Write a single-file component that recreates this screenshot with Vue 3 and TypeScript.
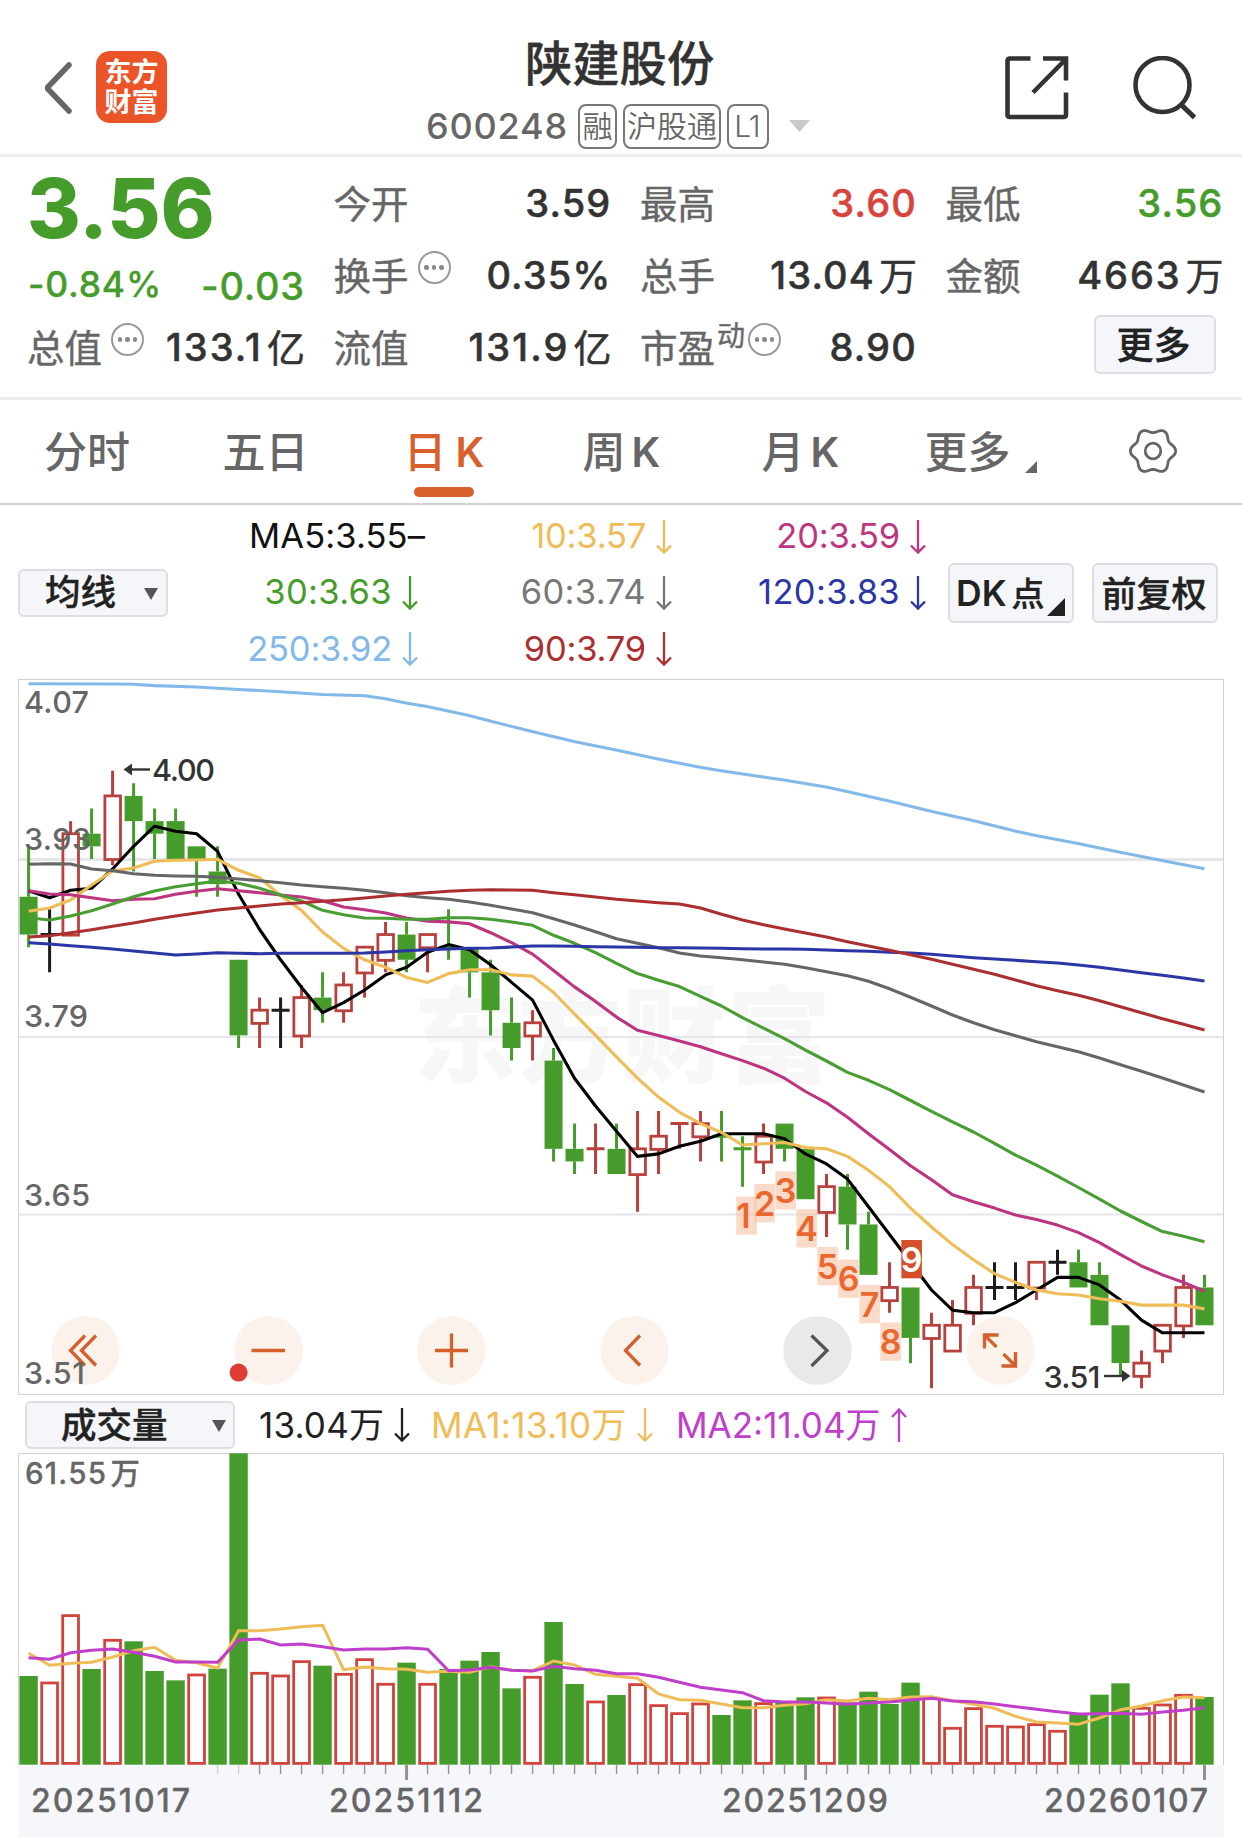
<script setup lang="ts">
type Tone = 'g' | 'r' | 'k'
type Candle = [tone: Tone, top: number, bottom: number, high: number, low: number, close: number]

const STEP = 20.998
const cx = (i: number): number => 28.6 + STEP * i
const py = (cents: number): number => 770.7 + (400 - cents) * 12.604

// tone, body top, body bottom, high, low (prices in cents)
const raw = `g 390 387 394 386|k 387 387 389 384|r 395 387 396 387|g 395 394 397 393|r 398 393 400 392.5
g 398 396 399 392|g 396 395 397 393|g 396 393 397 393|g 394 393 394 390|g 392 391 394 390
g 385 379 385 378|r 381 380 382 378|k 381 381 382 378|r 382 379 383 378|g 382 381 384 380
r 383 381 384 380|r 386 384 386 382|r 387 385 388 384|g 387 385 388 384|r 387 386 387 384
g 386 386 389 385|g 386 384 386 382|g 384 381 385 379|g 380 378 382 377|r 380 379 381 377
g 377 370 378 369|g 370 369 372 368|r 370 370 372 368|g 370 368 372 368|r 370 368 373 365
r 371 370 373 368|r 372 372 372 370|r 372 371 373 369|g 371 371 373 369|g 370 370 371 367
r 371 369 372 368|g 372 370 372 369|g 370 366 370 366|r 367 365 368 363|g 367 364 368 362
g 364 360 365 360|r 359 358 361 357|g 359 355 359 353|r 356 355 357 351|r 356 354 358 354
r 359 357 360 356|k 359 359 361 358|k 359 359 361 358|r 361 359 361 358|k 361 361 362 360
g 361 359 362 359|g 360 356 361 356|g 356 353 356 352|r 353 352 354 351|r 356 354 356 353
r 359 356 360 355|g 359 356 360 356`

const candles: Candle[] = raw.split(/[|\n]/).map((row) => {
  const p = row.trim().split(' ')
  const [top, bottom, high, low] = p.slice(1).map(Number)
  return [p[0] as Tone, top, bottom, high, low, p[0] === 'g' ? bottom : top]
})

const toneColor: Record<Tone, string> = { g: '#469c2b', r: '#b8413d', k: '#1c1c1c' }

const points = (ys: number[]): string => ys.map((y, i) => `${cx(i).toFixed(1)},${y.toFixed(1)}`).join(' ')
const nums = (s: string): number[] => s.trim().split(/\s+/).map(Number)
const lift = (ys: number[]): number[] => ys.map((v) => 670 + v / 3)

// Averages whose window starts before the first candle carry their own leading values.
function average(window: number, lead: number[]): string {
  const ys = lift(lead)
  for (let i = lead.length; i < candles.length; i++) {
    let sum = 0
    for (let k = i - window + 1; k <= i; k++) sum += candles[k][5]
    ys.push(py(sum / window))
  }
  return points(ys)
}

const priceLines = [
  { color: '#000', pts: average(5, nums('662 683 661 655')) },
  { color: '#efbc57', pts: average(10, nums('724 714 690 645 603 594 574 571 570 568')) },
  { color: '#bd3580', pts: average(20, nums('662 672 674 683 692 688 686 673 664 656 662 668 675 681 692 711 719 729 744')) },
  { color: '#489d33', pts: average(30, nums(`743 750 738 722 702 680 663 650 641 633 640 655 675 693 721 734 744
    745 748 748 743 743 748 756 766 796 820 848 880`)) },
  { color: '#666', pts: points(lift(nums(`583 581 582 597 602 611 616 618 619 622 627 632 638 645 650 655 661 668
    677 683 688 696 706 717 728 746 765 785 806 820 833 849 858 863 869 876 883 893 905 917 934 956 982 1008 1035
    1058 1079 1097 1115 1130 1145 1164 1184 1204 1224 1245 1266`))) },
  { color: '#2a36a5', pts: points(lift(nums(`818 822 827 832 837 843 849 855 852 848 850 851 850 850 850 850 849
    846 842 839 837 835 834 831 828 828 829 830 831 832 833 833 834 835 836 837 837 838 840 842 844 847 849 853 858
    863 867 871 875 879 885 892 900 908 916 924 933`))) },
  { color: '#ac2f30', pts: points(lift(nums(`801 797 788 779 769 759 748 738 729 720 714 708 702 698 694 689 684
    678 673 668 664 661 659 660 661 668 674 681 688 693 698 702 714 733 750 764 777 789 801 815 828 841 854 868 883
    898 913 930 947 962 976 992 1010 1028 1046 1063 1080`))) },
]

const yearLine =
  '28.6,683.7 113,684 133.6,684.3 154.6,685.6 196.6,687 238.6,689.5 280.6,691.7 322.6,694.5 364.6,695.7 385.6,698.7 406,703 427,706.5 469,715.5 490,721 532,731.5 574,741.5 616,750 658,759 700,767.3 721,770.7 763,777 784,780 826,787 847,791.5 890,801.3 932,811.5 974,820.7 1015,831 1037,835.7 1078,843.5 1120,852.3 1162,860.4 1204.5,868.7'

const countdown = [
  [34, 1196.5], [35, 1184], [36, 1171.3], [37, 1209.2], [38, 1247], [39, 1259.5], [40, 1285], [41, 1322.5], [42, 1240],
].map(([i, y], n) => ({ n: n + 1, x: cx(i) - (n === 0 ? 6.3 : 9.2), tx: cx(i) + 1, y }))

const volTop = nums(`228 245 43 207 117 124 213 241 221 206 -440 216 224 181 197 219 175 249 188 249 207 182 156 265
  228 66 252 302 285 250 313 337 308 345 301 307 305 292 290 307 275 312 248 291 381 322 375 377 370 390 343 284 250
  321 311 282 291`)
const volTone = 'grrgrggg rggrrrgrrrgrgg ggrggrgrrrrggrggrggggrrrrrrrgggrrrg'.replaceAll(' ', '')
const volumes = volTop.map((v, i) => ({ x: cx(i), y: 1600 + v / 3, up: volTone[i] === 'r' }))
const volLine = (s: string): string => points(nums(s).map((v) => 1600 + v / 3))
const volShort = volLine(`160 196 190 187 171 152 142 181 188 204 92 92 87 80 76 209 201 206 208 217 214 217 200 211
  212 183 195 223 229 235 282 299 301 312 323 323 316 311 299 303 295 299 291 290 302 313 325 349 366 369 373 354 329
  318 302 291 293`)
const volLong = volLine(`173 178 158 151 147 157 169 186 186 187 120 117 135 132 140 150 147 147 143 148 212 210 202
  211 213 199 206 211 221 221 232 247 262 270 278 302 306 306 309 313 309 306 300 295 303 305 312 320 328 335 342 341
  340 343 336 331 323`)

const ticks = Array.from({ length: 48 }, (_, k) => k + 9)
const legend = [
  { t: 'MA5:3.55–', c: '#111', flat: true }, { t: '10:3.57', c: '#efbc57' }, { t: '20:3.59', c: '#bd3580' },
  { t: '30:3.63', c: '#469c2b', wide: true }, { t: '60:3.74', c: '#777', wide: true }, { t: '120:3.83', c: '#2a36a5', wide: true },
  { t: '250:3.92', c: '#82b9ea' }, { t: '90:3.79', c: '#ac2f30' },
]
const gear = (() => {
  const out: string[] = []
  for (let a = 0; a < 360; a += 5) {
    const r = 20.5 - 2.2 * Math.cos((a * 6 * Math.PI) / 180)
    const t = (a * Math.PI) / 180
    out.push(`${(26 + r * Math.sin(t)).toFixed(1)},${(26 - r * Math.cos(t)).toFixed(1)}`)
  }
  return out.join(' ')
})()
</script>

<template>
  <div class="page">
    <header class="top">
      <div class="left">
        <svg class="back" width="32" height="56" viewBox="0 0 32 56"><path d="M27 5 5 28 27 51" fill="none" stroke="#666" stroke-width="5.5" stroke-linecap="round" stroke-linejoin="bevel" /></svg>
        <div class="logo"><span>东方</span><span>财富</span></div>
      </div>
      <div class="mid">
        <h1>陕建股份</h1>
        <div class="sub">
          <span class="code">600248</span>
          <span class="tag t1">融</span><span class="tag t2">沪股通</span><span class="tag t3">L1</span>
          <svg width="21" height="12" viewBox="0 0 21 12"><path d="M0 0H21L10.5 12z" fill="#c9c9c9" /></svg>
        </div>
      </div>
      <div class="right">
        <svg width="64" height="64" viewBox="0 0 64 64" fill="none" stroke="#333" stroke-width="4.6"><path d="M25.500 2.500H5Q2.500 2.500 2.500 5V58.500Q2.500 61 5 61H58.500Q61 61 61 58.500V36.500M38 2.500H61V24.500M28 36.500 60.500 3.500" /></svg>
        <svg width="66" height="66" viewBox="0 0 66 66" fill="none" stroke="#333" stroke-width="4.6"><circle cx="29.500" cy="29" r="27" /><path d="M48 48.500 61.500 61.500" stroke-width="5.200" /></svg>
      </div>
    </header>

    <section class="quote">
      <div class="col c1">
        <div class="price">3.56</div>
        <div class="row chg"><span>-0.84%</span><span class="abs">-0.03</span></div>
        <div class="row"><label>总值<i class="info"><b /><b /><b /></i></label><span class="v loose">133.1<em>亿</em></span></div>
      </div>
      <div class="col">
        <div class="row"><label>今开</label><span class="v">3.59</span></div>
        <div class="row"><label>换手<i class="info"><b /><b /><b /></i></label><span class="v">0.35%</span></div>
        <div class="row"><label>流值</label><span class="v loose">131.9<em>亿</em></span></div>
      </div>
      <div class="col">
        <div class="row"><label>最高</label><span class="v up">3.60</span></div>
        <div class="row"><label>总手</label><span class="v">13.04<em>万</em></span></div>
        <div class="row"><label>市盈<sup>动</sup><i class="info tight"><b /><b /><b /></i></label><span class="v">8.90</span></div>
      </div>
      <div class="col">
        <div class="row"><label>最低</label><span class="v down">3.56</span></div>
        <div class="row"><label>金额</label><span class="v amount">4663<em>万</em></span></div>
        <div class="row end"><button class="btn more">更多</button></div>
      </div>
    </section>

    <nav class="tabs">
      <span>分时</span><span>五日</span><span class="on">日<u>K</u></span><span>周<u>K</u></span><span>月<u>K</u></span>
      <span>更多<svg class="corner" width="12" height="12" viewBox="0 0 12 12"><path d="M12 0V12H0z" fill="#666" /></svg></span>
      <svg class="gear" width="52" height="52" viewBox="0 0 52 52" fill="none" stroke="#666" stroke-width="2.800"><polygon :points="gear" stroke-linejoin="round" /><circle cx="26" cy="26" r="7.800" /></svg>
    </nav>

    <section class="legend">
      <button class="btn avg">均线<svg width="14" height="12" viewBox="0 0 14 12"><path d="M0 0H14L7 12z" fill="#555" /></svg></button>
      <div class="mas">
        <span v-for="m in legend" :key="m.t" :class="{ flat: m.flat, wide: m.wide }" :style="{ color: m.c }">{{ m.t }}<svg v-if="!m.flat" width="16" height="36" viewBox="0 0 16 36" fill="none" stroke="currentColor" stroke-width="2.300"><path d="M8 1V33M1 26.500 8 33.500 15 26.500" /></svg></span>
      </div>
      <button class="btn dk">DK<em>点</em><svg width="18" height="18" viewBox="0 0 18 18"><path d="M18 0V18H0z" fill="#222" /></svg></button>
      <button class="btn adj">前复权</button>
    </section>

    <svg class="chart" width="1242" height="717" viewBox="0 679 1242 717">
      <rect x="18.500" y="679.500" width="1205" height="715" fill="#fff" stroke="#cfd2d6" />
      <text x="413" y="1075" class="mark" textLength="418">东方财富</text>
      <g stroke="#e4e6ea" stroke-width="2"><path d="M19 859.500H1223" stroke-width="2.800" /><path d="M19 1037H1223M19 1214.500H1223" /></g>
      <g v-for="(c, i) in candles" :key="i" :stroke="toneColor[c[0]]" stroke-width="3" fill="none">
        <template v-if="c[1] === c[2]">
          <path :d="`M${cx(i)} ${py(c[3])}V${py(c[4])}M${cx(i) - 9} ${py(c[1])}h18`" />
        </template>
        <template v-else>
          <path :d="`M${cx(i)} ${py(c[3])}V${py(c[1])}M${cx(i)} ${py(c[2])}V${py(c[4])}`" />
          <rect v-if="c[0] === 'g'" :x="cx(i) - 9" :y="py(c[1])" width="18" :height="py(c[2]) - py(c[1])" fill="#469c2b" stroke="none" />
          <rect v-else :x="cx(i) - 7.700" :y="py(c[1])" width="15.600" :height="py(c[2]) - py(c[1]) + 0.600" stroke-width="2.800" />
        </template>
      </g>
      <g fill="none" stroke-width="3.100" stroke-linejoin="round">
        <polyline :points="yearLine" stroke="#82b9ea" />
        <polyline v-for="l in priceLines" :key="l.color" :points="l.pts" :stroke="l.color" />
      </g>
      <g v-for="d in countdown" :key="d.n" class="count">
        <rect :x="d.x" :y="d.y" width="20.600" height="38.300" :fill="d.n === 9 ? '#d2512a' : '#f6c3a6'" :fill-opacity="d.n === 9 ? 1 : 0.6" />
        <text :x="d.tx" :y="d.y + 31.500" :fill="d.n === 9 ? '#fff' : '#ea682f'">{{ d.n }}</text>
      </g>
      <g fill="#fbf2ec">
        <circle v-for="x in [85.500, 268.500, 451.500, 634.500, 1000.500]" :key="x" :cx="x" cy="1350.500" r="34.300" />
        <circle cx="817.500" cy="1350.500" r="34.300" fill="#e9e9e9" />
      </g>
      <g fill="none" stroke="#d4602b" stroke-width="3.300">
        <path d="M85 1335.500 70.500 1350.500 85 1365.500M96 1335.500 81.500 1350.500 96 1365.500" />
        <path d="M251.500 1350.500H285M435 1350.500H468M451.500 1333.500V1367.500" />
        <path d="M640 1335.500 625.500 1350.500 640 1365.500" />
        <path d="M811.500 1335.500 827 1350.500 811.500 1366" stroke="#555" />
        <path d="M984.500 1348.500V1335H998.500M984.500 1335 996.500 1347M1001.500 1366H1015.500V1352M1015.500 1366 1003.500 1354" />
      </g>
      <circle cx="238.600" cy="1372.600" r="9" fill="#de3b34" />
      <g class="axis">
        <text x="24" y="712.500" textLength="65">4.07</text><text x="24" y="849.500" textLength="67">3.93</text>
        <text x="24" y="1027" textLength="64">3.79</text><text x="24" y="1206" textLength="66">3.65</text>
        <text x="24" y="1384" textLength="61">3.51</text>
        <text x="152" y="781" fill="#333" textLength="63">4.00</text><text x="1043.500" y="1388" fill="#333" textLength="57">3.51</text>
      </g>
      <g fill="#333" stroke="#333" stroke-width="2.400">
        <path d="M128 769.500H150" /><path d="M123.500 769.500 132 763.500V775.500z" stroke="none" />
        <path d="M1104 1376H1124" /><path d="M1130.500 1376 1122 1370V1382z" stroke="none" />
      </g>
    </svg>

    <section class="volbar">
      <button class="btn vol">成交量<svg width="14" height="12" viewBox="0 0 14 12"><path d="M0 0H14L7 12z" fill="#555" /></svg></button>
      <span class="m1">13.04万<svg width="16" height="36" viewBox="0 0 16 36" fill="none" stroke="currentColor" stroke-width="2.300"><path d="M8 1V33M1 26.500 8 33.500 15 26.500" /></svg></span>
      <span class="m2">MA1:13.10万<svg width="16" height="36" viewBox="0 0 16 36" fill="none" stroke="currentColor" stroke-width="2.300"><path d="M8 1V33M1 26.500 8 33.500 15 26.500" /></svg></span>
      <span class="m3">MA2:11.04万<svg width="16" height="36" viewBox="0 0 16 36" fill="none" stroke="currentColor" stroke-width="2.300"><path d="M8 35V3M1 10 8 2.500 15 10" /></svg></span>
    </section>

    <svg class="chart" width="1242" height="384" viewBox="0 1453 1242 384">
      <rect x="18" y="1765" width="1206" height="72" fill="#f6f7fa" />
      <path d="M18.500 1765V1453.500H1223.500V1765" fill="#fff" stroke="#cfd2d6" />
      <template v-for="(v, i) in volumes" :key="i">
        <rect v-if="v.up" :x="v.x - 7.900" :y="v.y + 1.300" width="15.800" :height="1763.400 - v.y - 1.300" fill="#fff" stroke="#d0443d" stroke-width="2.800" />
        <rect v-else :x="v.x - 9.200" :y="v.y" width="18.400" :height="1764.700 - v.y" fill="#469c2b" />
      </template>
      <g fill="none" stroke-width="3"><polyline :points="volShort" stroke="#efbc57" /><polyline :points="volLong" stroke="#c03fca" /></g>
      <rect
        v-for="i in ticks" :key="i" :x="cx(i) - ((i + 1) % 19 === 0 ? 1.500 : 0.700)" y="1765"
        :width="(i + 1) % 19 === 0 ? 3 : 1.400" :height="(i + 1) % 19 === 0 ? 15 : 9" fill="#939393" :opacity="i < 11 ? 0.4 : 1"
      />
      <g class="dates">
        <text x="25" y="1484" class="vmax" textLength="81">61.55</text><text x="110.500" y="1484" class="vmax">万</text>
        <text x="31" y="1812" textLength="159">20251017</text><text x="329" y="1812" textLength="154">20251112</text>
        <text x="722" y="1812" textLength="166">20251209</text><text x="1044" y="1812" textLength="164">20260107</text>
      </g>
    </svg>
  </div>
</template>

<style>
body { margin: 0; background: #fff; }
</style>

<style scoped>
.page { width: 1242px; height: 1837px; overflow: hidden; background: #fff; color: #333; font-family: Inter, "Noto Sans CJK SC", sans-serif; font-size: 37px; }
.page svg { flex: none; display: block; }
em, i, u { font-style: normal; text-decoration: none; }
.top { box-sizing: border-box; height: 157px; border-bottom: 3px solid #ededed; display: grid; grid-template-columns: 426px 1fr 237px; }
.left { display: flex; align-items: flex-start; padding: 51px 0 0 42px; }
.back { margin: 9px 22px 0 0; }
.logo { width: 71px; height: 72px; border-radius: 14px; background: #ea5428; color: #fff; display: flex; flex-direction: column; align-items: center; justify-content: center; font-size: 27px; font-weight: 700; line-height: 30px; padding-top: 1px; box-sizing: border-box; }
.mid { display: flex; flex-direction: column; }
h1 { margin: 36px 0 0 99px; font-size: 47.300px; font-weight: 500; line-height: 56px; -webkit-text-stroke: .4px; }
.sub { display: flex; align-items: center; height: 46px; margin-top: 11px; color: #666; }
.code { font-size: 36px; font-weight: 500; letter-spacing: .8px; width: 152px; margin-top: -1px; }
.tag { box-sizing: border-box; height: 45px; border: 2px solid #777; border-radius: 8px; font-size: 30px; font-weight: 350; line-height: 40px; text-align: center; margin-right: 6px; white-space: nowrap; }
.t1 { width: 39px; } .t2 { width: 98px; } .t3 { width: 42px; margin-right: 20px; letter-spacing: -1px; padding-right: 2px; }
.right { display: flex; padding: 56px 0 0; }
.right svg { margin-right: 64px; }
.quote { box-sizing: border-box; height: 243px; padding: 10px 18px 0 28px; border-bottom: 3px solid #ededed; display: grid; grid-template-columns: 277px 277px 276px 277px; column-gap: 29.500px; }
.col { display: flex; flex-direction: column; }
.row { height: 72px; display: flex; justify-content: space-between; align-items: center; white-space: nowrap; }
label { display: flex; align-items: center; color: #666; font-size: 37.500px; margin: -4px 0 0 -1px; -webkit-text-stroke: .4px; }
.v { display: flex; align-items: center; font-weight: 500; font-size: 38px; letter-spacing: 1.200px; -webkit-text-stroke: .5px; }
.loose { letter-spacing: 2.100px; }
.amount { letter-spacing: 1.900px; }
.v em { margin: -3px 0 0 4px; font-size: 38px; font-weight: 400; letter-spacing: 0; }
.up { color: #d9433d; } .down, .chg, .price { color: #469c2b; }
.price { height: 82px; line-height: 88px; margin: -2px 0 0 -1px; font-size: 82px; font-weight: 800; letter-spacing: -.3px; }
.chg { height: 64px; padding-top: 10px; box-sizing: border-box; font-size: 35.500px; font-weight: 500; letter-spacing: .8px; -webkit-text-stroke: .3px; }
.chg .abs { font-size: 38px; margin-top: 3px; }
.info { box-sizing: border-box; width: 33px; height: 33px; border: 2.500px solid #999; border-radius: 50%; display: flex; align-items: center; justify-content: center; gap: 3px; margin: -11px 0 0 9px; }
.info b { width: 4.500px; height: 4.500px; border-radius: 50%; background: #888; }
.info.tight { margin-left: 3px; }
sup { font-size: 28px; line-height: 30px; margin: -18px 0 0 2px; }
.end { justify-content: flex-end; }
.btn { box-sizing: border-box; padding: 0; margin: 0; border: 2px solid #dcdee1; border-radius: 6px; background: #f5f6f9; color: #222; font: 500 35.500px Inter, "Noto Sans CJK SC", sans-serif; line-height: 40px; display: flex; align-items: center; white-space: nowrap; -webkit-text-stroke: .4px; }
.more { width: 122px; height: 59px; margin: -5px 8px 0 0; padding: 3px 2px 0 0; justify-content: center; font-size: 37px; }
.tabs { box-sizing: border-box; height: 105px; border-bottom: 2px solid #d0d3d3; display: grid; grid-template-columns: 178.500px 181px 179px 179px 163px 203px 1fr; padding-left: 44px; color: #666; font-size: 43px; font-weight: 500; line-height: 104px; }
.tabs span { display: flex; position: relative; }
.tabs u { margin-left: 6px; font-weight: 600; font-size: 41px; }
.tabs .on { color: #d8602b; }
.tabs .on u { margin-left: 9px; }
.tabs .on::after { content: ""; position: absolute; left: 10px; top: 87px; width: 60px; height: 10px; border-radius: 5px; background: #d8602b; }
.corner { margin: 61px 0 0 14px; }
.gear { margin: 25px 0 0 -1px; }
.legend { height: 174px; display: flex; align-items: center; padding-left: 18px; }
.legend .avg { width: 150px; height: 48px; padding: 0 0 0 25px; margin-top: 2px; }
.avg svg { margin: 1px 0 0 28px; }
.mas { width: 758px; height: 169px; display: grid; grid-template-columns: 250px 254px 254px; grid-auto-rows: 56.300px; font-size: 34.500px; }
.mas span { display: flex; align-items: center; justify-content: flex-end; white-space: nowrap; letter-spacing: -.2px; }
.mas svg { margin: 2px 0 0 10px; }
.mas .flat { margin-right: -7px; letter-spacing: .1px; }
.mas .wide { letter-spacing: .35px; }
.dk { width: 126px; height: 60px; margin: 2px 0 0 22px; padding: 2px 0 0 6px; font-weight: 600; -webkit-text-stroke: 0; }
.dk em { margin: -1px 0 0 5px; font-size: 33px; font-weight: 500; -webkit-text-stroke: .4px; }
.dk svg { margin: 26px 0 0 2px; }
.adj { width: 126px; height: 60px; margin: 2px 0 0 18px; padding: 2px 2px 0 0; justify-content: center; font-size: 35px; }
.mark { font: 900 104px "Noto Sans CJK SC", sans-serif; fill: #f7f7f8; }
.axis { font-size: 30.500px; font-weight: 500; fill: #666; }
.count text { font-size: 34px; font-weight: 600; text-anchor: middle; }
.volbar { height: 57px; display: flex; align-items: center; padding: 1px 0 0 25px; box-sizing: border-box; font-size: 36px; }
.vol { width: 210px; height: 48px; padding: 1px 0 0 34px; }
.vol svg { margin: 0 0 0 44px; }
.volbar span { display: flex; align-items: center; white-space: nowrap; font-size: 35px; letter-spacing: .2px; line-height: 40px; }
.volbar span svg { margin-left: 10px; }
.m1 { margin-left: 24px; width: 172px; color: #222; } .volbar .m2 { width: 245px; color: #efbc57; letter-spacing: .35px; } .volbar .m3 { color: #c03fca; letter-spacing: 0; }
.dates { font-size: 32px; font-weight: 500; fill: #666; stroke: #666; stroke-width: .3px; }
.vmax { font-size: 29.500px; }
</style>
